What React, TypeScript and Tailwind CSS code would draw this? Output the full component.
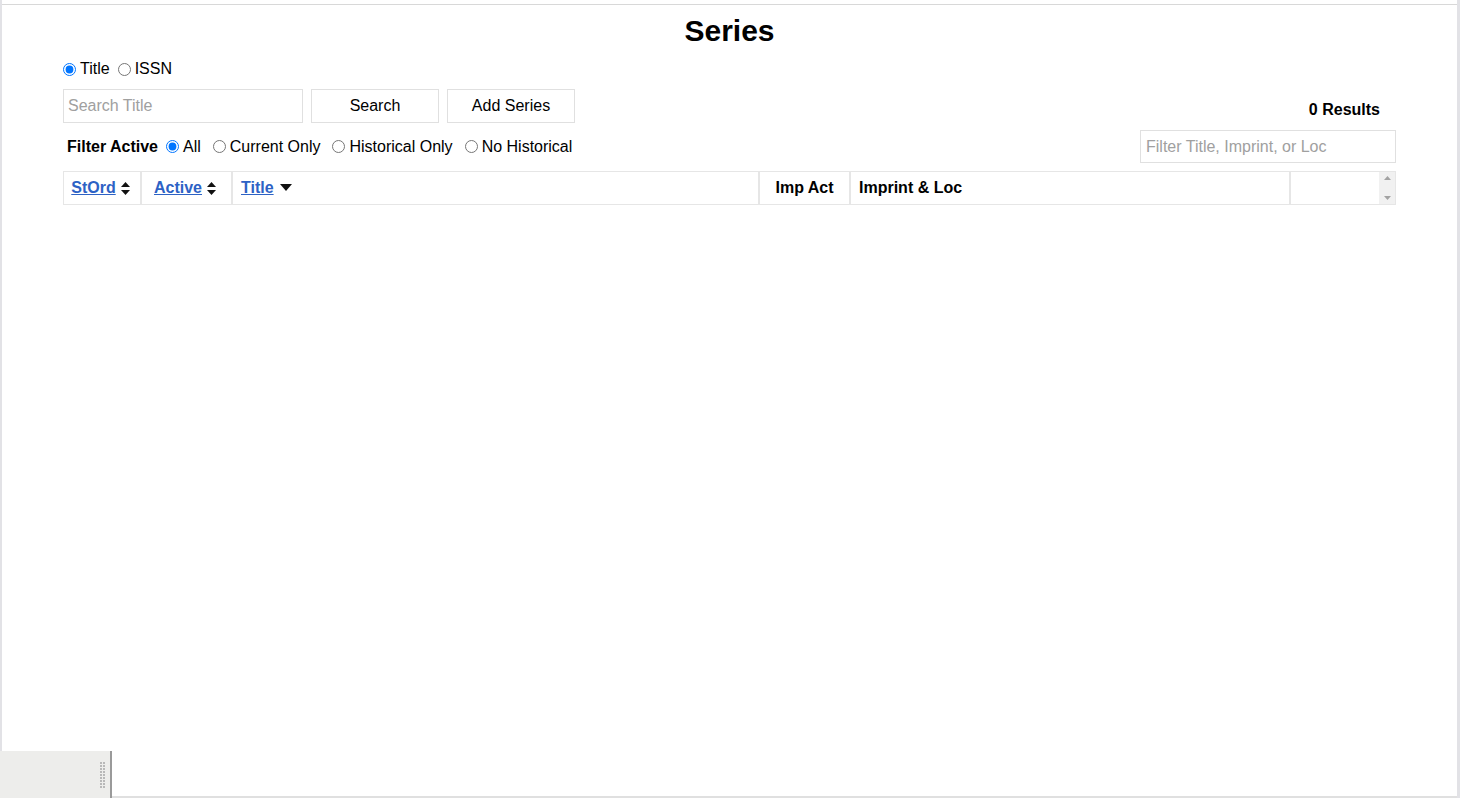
import React from 'react';

const SortBoth = () => (
  <svg width="9" height="13" viewBox="0 0 9 13" className="inline-block">
    <path d="M4.5 0 L9 5 H0 Z" fill="#111" />
    <path d="M4.5 13 L9 8 H0 Z" fill="#111" />
  </svg>
);

const SortDown = () => (
  <svg width="12" height="8" viewBox="0 0 12 8" className="inline-block">
    <path d="M0 0 H12 L6 7 Z" fill="#111" />
  </svg>
);

const Radio = ({ checked, label }: { checked?: boolean; label: string }) => (
  <label className="flex items-center">
    <input type="radio" defaultChecked={checked} className="m-0 mr-[4px] h-[13px] w-[13px]" readOnly />
    <span>{label}</span>
  </label>
);

export default function App() {
  return (
    <div className="w-[1460px] h-[798px] flex flex-col bg-white overflow-hidden text-[16px] text-black font-['Liberation_Sans',Arial,sans-serif]">
      <div className="flex-1 flex flex-col border-l-2 border-r-[3px] border-[#e2e2e6]">
        <div className="mt-[4px] border-t border-[#d8d8d8]" />
        <div className="px-[61px]">
          <h1 className="text-center text-[30px] font-bold leading-[34px] mt-[9px]">Series</h1>

          <div className="flex items-center gap-[8px] mt-[11px] h-[20px]">
            <Radio checked label="Title" />
            <Radio label="ISSN" />
          </div>

          <div className="flex items-end justify-between mt-[10px]">
            <div className="flex gap-[8px]">
              <input
                placeholder="Search Title"
                className="w-[240px] h-[34px] border border-[#e0e0e0] px-[4px] placeholder:text-[#a0a0a0] outline-none"
              />
              <button className="w-[128px] h-[34px] border border-[#e0e0e0] bg-white">Search</button>
              <button className="w-[128px] h-[34px] border border-[#e0e0e0] bg-white">Add Series</button>
            </div>
            <div className="font-bold pr-[16px] mb-[1px]">0 Results</div>
          </div>

          <div className="flex items-center justify-between mt-[7px]">
            <div className="flex items-center gap-[12px] pl-[4px]">
              <span className="font-bold">Filter Active</span>
              <div className="flex items-center gap-[12px] -ml-[4px]">
                <Radio checked label="All" />
                <Radio label="Current Only" />
                <Radio label="Historical Only" />
                <Radio label="No Historical" />
              </div>
            </div>
            <input
              placeholder="Filter Title, Imprint, or Loc"
              className="w-[256px] h-[33px] border border-[#e0e0e0] px-[5px] placeholder:text-[#a0a0a0] outline-none"
            />
          </div>

          <div className="mt-[8px] flex h-[34px] border border-[#e6e6e6] font-bold">
            <div className="w-[78px] flex items-center justify-center gap-[5px] pr-[3px] border-r-2 border-[#e6e6e6]">
              <a href="#" className="text-[#2d62c5] underline">StOrd</a>
              <SortBoth />
            </div>
            <div className="w-[91px] flex items-center justify-center gap-[5px] pr-[3px] border-r-2 border-[#e6e6e6]">
              <a href="#" className="text-[#2d62c5] underline">Active</a>
              <SortBoth />
            </div>
            <div className="w-[527px] flex items-center gap-[6px] pl-[8px] border-r-2 border-[#e6e6e6]">
              <a href="#" className="text-[#2d62c5] underline">Title</a>
              <SortDown />
            </div>
            <div className="w-[91px] flex items-center justify-center border-r-2 border-[#e6e6e6]">Imp Act</div>
            <div className="w-[440px] flex items-center pl-[8px] border-r-2 border-[#e6e6e6]">Imprint &amp; Loc</div>
            <div className="flex-1" />
            <div className="w-[16px] bg-[#f1f1f1] flex flex-col items-center justify-between py-[4px]">
              <svg width="7" height="4" viewBox="0 0 7 4"><path d="M3.5 0 L7 4 H0 Z" fill="#a3a3a3" /></svg>
              <svg width="7" height="4" viewBox="0 0 7 4"><path d="M0 0 H7 L3.5 4 Z" fill="#a3a3a3" /></svg>
            </div>
          </div>
        </div>
      </div>

      <div className="h-[47px] flex">
        <div className="w-[112px] bg-[#ededeb] border-r-2 border-[#9a9a9a] flex items-center justify-end pr-[5px]">
          <div className="grid grid-cols-2 gap-x-[1px] gap-y-[1px]">
            {Array.from({ length: 18 }).map((_, i) => (
              <div key={i} className="w-[2px] h-[2px] bg-[#b8b8b8]" />
            ))}
          </div>
        </div>
        <div className="flex-1 flex flex-col justify-end border-r-[3px] border-[#e2e2e6]">
          <div className="h-[2px] bg-[#e0e0e0]" />
        </div>
      </div>
    </div>
  );
}
